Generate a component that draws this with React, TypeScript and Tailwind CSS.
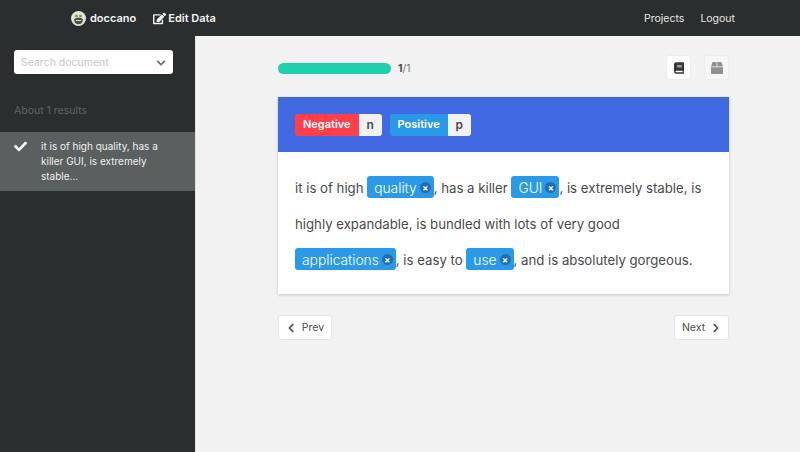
import React from 'react';
import { FaBook, FaBox, FaCheck, FaChevronDown, FaChevronLeft, FaChevronRight, FaEdit } from 'react-icons/fa';

const font = { fontFamily: 'Inter, "Noto Sans", sans-serif' };

const Logo = () => (
    <svg width="15" height="15" viewBox="0 0 30 30">
        <circle cx="15" cy="15" r="15" fill="#dfe8d6" />
        <path d="M6 17 C8 12 22 12 24 17 L22 24 C18 27 12 27 8 24 Z" fill="#4a4f45" />
        <circle cx="11" cy="10" r="3" fill="#7d9a6a" />
        <circle cx="19" cy="10" r="3" fill="#7d9a6a" />
        <rect x="10" y="18" width="10" height="2" fill="#dfe8d6" />
    </svg>
);

const Entity = ({ text }: { text: string }) => (
    <span className="inline-flex items-center h-[22px] pt-[3px] pl-[7px] pr-[3px] rounded-[3px] bg-[#2a9ae8] text-[13.8px] font-light text-white align-baseline leading-none">
        {text}
        <span className="ml-[3px] -mt-[3px] w-[11px] h-[11px] rounded-full bg-[#1f6fb0] flex items-center justify-center text-[9px] font-bold leading-none">×</span>
    </span>
);

const LabelTag = ({ name, shortcut, color }: { name: string; shortcut: string; color: string }) => (
    <div className="flex h-[22px] text-[11px] font-semibold rounded-[3px] overflow-hidden">
        <span className={`flex items-center px-[8px] text-white ${color}`}>{name}</span>
        <span className="flex items-center justify-center w-[23px] bg-[#f1f1f1] text-[#4a4a4a] text-[12px]">{shortcut}</span>
    </div>
);

export default function App() {
    return (
        <div className="w-[800px] h-[452px] flex flex-col overflow-hidden bg-[#f2f2f2]" style={font}>
            {/* Navbar */}
            <nav className="h-[36px] shrink-0 bg-[#2a2e2f] flex items-center pt-[1px] pl-[71px] pr-[65px] text-white text-[10.5px]">
                <Logo />
                <span className="ml-[4px] text-[11px] font-semibold text-[#f2f2f2]">doccano</span>
                <span className="ml-[17px] flex items-center gap-[2px] text-[11px] font-semibold text-[#f2f2f2]">
                    <FaEdit className="w-[13px] h-[13px]" />
                    Edit Data
                </span>
                <span className="ml-auto text-[#e8e8e8]">Projects</span>
                <span className="ml-[16px] text-[#e8e8e8]">Logout</span>
            </nav>

            <div className="flex flex-1 min-h-0">
                {/* Sidebar */}
                <aside className="w-[196px] shrink-0 bg-[#2a2e2f] border-r border-[#e4e4e4] pt-[14px]">
                    <div className="mx-[14px] w-[159px] h-[24px] bg-white rounded-[3px] flex items-center justify-between pl-[7px] pr-[7px] pt-[1px] text-[10.5px] text-[#c8c8c8]">
                        Search document
                        <FaChevronDown className="w-[10px] h-[10px] text-[#6b6b6b]" />
                    </div>
                    <div className="mt-[30px] ml-[14px] text-[10.5px] leading-[14px] text-[#5d6466]">About 1 results</div>
                    <div className="mt-[14px] h-[59px] bg-[#5a5f60] flex pl-[14px] pr-[30px] pt-[7px] text-white">
                        <FaCheck className="w-[13px] h-[13px] mt-[1px] shrink-0" />
                        <p className="ml-[14px] text-[10px] leading-[15px] text-[#f0f0f0]">it is of high quality, has a killer GUI, is extremely stable...</p>
                    </div>
                </aside>

                {/* Main */}
                <main className="flex-1 pl-[82px] pr-[71px] pt-[19px]">
                    <div className="h-[25px] flex items-center">
                        <div className="w-[113px] h-[11px] mt-[2px] rounded-full bg-[#1fd0aa]" />
                        <span className="ml-[7px] mt-[2px] text-[10.5px] text-[#7a7a7a]"><b className="text-[#4a4a4a] font-bold">1</b>/1</span>
                        <button className="ml-auto w-[25px] h-[25px] bg-white rounded-[3px] flex items-center justify-center border border-[#ececec]">
                            <FaBook className="w-[10px] h-[12px] text-[#363636]" />
                        </button>
                        <button className="ml-[13px] w-[25px] h-[25px] bg-[#f6f6f6] rounded-[3px] flex items-center justify-center border border-[#ececec]">
                            <FaBox className="w-[12px] h-[12px] text-[#8f8f8f]" />
                        </button>
                    </div>

                    <section className="mt-[17px] bg-white shadow-[0_1px_3px_rgba(0,0,0,0.2)]">
                        <div className="h-[55px] bg-[#4169e1] flex items-center gap-[8px] pl-[17px]">
                            <LabelTag name="Negative" shortcut="n" color="bg-[#ff3f4a]" />
                            <LabelTag name="Positive" shortcut="p" color="bg-[#2a9ae8]" />
                        </div>
                        <div className="px-[17px] pt-[18px] pb-[16px] text-[13.2px] leading-[36px] text-[#4a4a4a]">
                            it is of high <Entity text="quality" />, has a killer <Entity text="GUI" />, is extremely stable, is highly expandable, is bundled with lots of very good <Entity text="applications" />, is easy to <Entity text="use" />, and is absolutely gorgeous.
                        </div>
                    </section>

                    <div className="mt-[21px] flex justify-between">
                        <button className="w-[54px] h-[25px] bg-white rounded-[3px] border border-[#e6e6e6] flex items-center justify-center gap-[6px] text-[10.5px] text-[#4a4a4a]">
                            <FaChevronLeft className="w-[10px] h-[10px]" />
                            Prev
                        </button>
                        <button className="w-[55px] h-[25px] bg-white rounded-[3px] border border-[#e6e6e6] flex items-center justify-center gap-[6px] text-[10.5px] text-[#4a4a4a]">
                            Next
                            <FaChevronRight className="w-[10px] h-[10px]" />
                        </button>
                    </div>
                </main>
            </div>
        </div>
    );
}
